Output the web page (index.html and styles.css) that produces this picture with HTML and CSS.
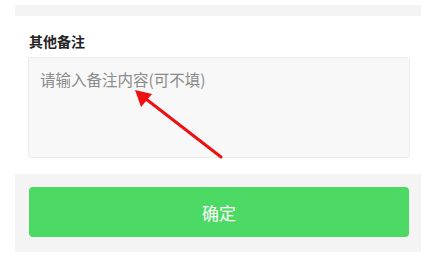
FILE: index.html
```html
<!DOCTYPE html>
<html lang="zh-CN">
  <head>
    <meta charset="UTF-8" />
    <meta name="viewport" content="width=device-width, initial-scale=1.0" />
    <title>其他备注</title>
    <link rel="stylesheet" href="styles.css">
  </head>
  <body>
    <div class="page">
      <div class="gap-band"></div>

      <div class="remark-section">
        <div class="remark-title">其他备注</div>
        <textarea class="remark-input" placeholder="请输入备注内容(可不填)"></textarea>
      </div>

      <div class="footer-band">
        <button class="confirm-btn">确定</button>
      </div>

      <!-- annotation arrow pointing at the placeholder -->
      <svg class="hint-arrow" width="437" height="262" viewBox="0 0 437 262">
        <line x1="221" y1="157" x2="146" y2="99" stroke="#ee1111" stroke-width="3" stroke-linecap="round" />
        <polygon points="135,90 152,94 141,107" fill="#ee1111" />
      </svg>
    </div>
  </body>
</html>
```

FILE: styles.css
```css
/* Base */
body {
  margin: 0;
  padding: 0;
  background-color: #fff;
  font-family: "Microsoft YaHei", "Noto Sans CJK SC", sans-serif;
}

.page {
  position: relative;
  width: 437px;
  height: 262px;
  overflow: hidden;
}

/* Gray strip at the top */
.gap-band {
  margin: 5px 16px 0 15px;
  height: 11px;
  background-color: #f4f4f4;
}

/* Remark block */
.remark-section {
  display: flex;
  flex-direction: column;
  padding: 15px 27px 0 28px;
}

.remark-title {
  font-size: 14px;
  font-weight: bold;
  line-height: 20px;
  color: #222;
  padding-left: 1px;
}

.remark-input {
  margin-top: 6px;
  height: 101px;
  box-sizing: border-box;
  padding: 10px 11px;
  border: 1px solid #ececec;
  border-radius: 3px;
  background-color: #f8f8f8;
  font-family: inherit;
  font-size: 15.5px;
  line-height: 22px;
  color: #333;
  resize: none;
  outline: none;
}

.remark-input::placeholder {
  color: #8a8a8a;
}

/* Bottom strip with button */
.footer-band {
  margin: 16px 16px 0 15px;
  padding: 13px 12px 15px 14px;
  background-color: #f4f4f4;
}

.confirm-btn {
  display: block;
  width: 100%;
  height: 50px;
  border: none;
  border-radius: 4px;
  background-color: #4cd964;
  color: #fff;
  font-family: inherit;
  font-size: 17px;
  cursor: pointer;
}

/* Annotation overlay */
.hint-arrow {
  position: absolute;
  left: 0;
  top: 0;
  pointer-events: none;
}
```
